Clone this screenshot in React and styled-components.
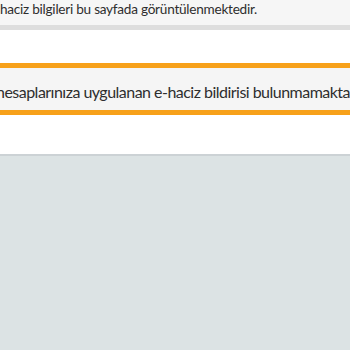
import styled, { createGlobalStyle } from 'styled-components';

const GlobalStyle = createGlobalStyle`
  html, body {
    margin: 0;
    padding: 0;
    background: #dce3e4;
  }
  body {
    font-family: 'Lato', 'Open Sans', sans-serif;
    color: #2e2e2e;
    overflow: hidden;
  }
`;

const Page = styled.div`
  width: 350px;
  height: 350px;
  display: flex;
  flex-direction: column;
  overflow: hidden;
`;

const Content = styled.main`
  background: #fff;
  padding-bottom: 39px;
  border-bottom: 2px solid #ccd2d5;
`;

const Intro = styled.p`
  margin: 0 0 33px;
  padding: 0 0 7px;
  background: #f6f6f6;
  border-bottom: 5px solid #dedede;
  font-size: 13.6px;
  letter-spacing: -0.25px;
  line-height: 18px;
  white-space: nowrap;
  text-indent: ${({ shift }) => shift}px;
`;

const Alert = styled.div`
  background: #f5f5f5;
  border-top: 5px solid #f7a11a;
  border-bottom: 5px solid #f7a11a;
  padding: 13px 0 7px;
  font-size: 16px;
  letter-spacing: -0.52px;
  line-height: 22px;
  white-space: nowrap;
  text-indent: ${({ shift }) => shift}px;
`;

const Footer = styled.div`
  flex: 1;
  background: #dce3e4;
`;

export default function App() {
  return (
    <>
      <GlobalStyle />
      <Page>
        <Content>
          <Intro shift={0}>haciz bilgileri bu sayfada görüntülenmektedir.</Intro>
          <Alert shift={-4}>hesaplarınıza uygulanan e-haciz bildirisi bulunmamaktadır.</Alert>
        </Content>
        <Footer />
      </Page>
    </>
  );
}
